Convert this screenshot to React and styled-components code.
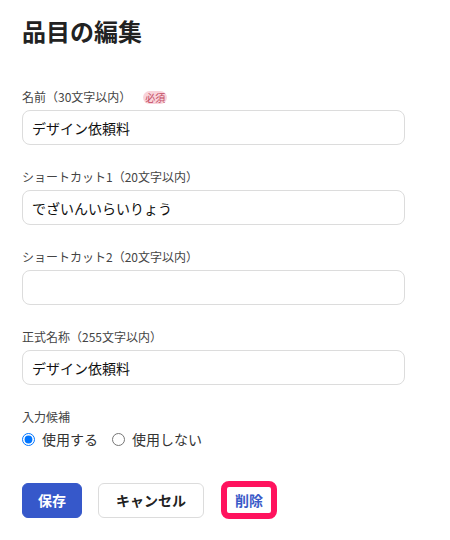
import React from "react";
import styled, { createGlobalStyle } from "styled-components";

const Global = createGlobalStyle`
  html, body { margin: 0; padding: 0; background: #fff; }
  body { font-family: "Noto Sans CJK JP", "Noto Sans", sans-serif; color: #222; }
  * { box-sizing: border-box; }
`;

const Page = styled.div`
  padding: 13px 22px 20px 22px;
  width: 427px;
`;

const Title = styled.h1`
  margin: 0 0 39px 0;
  font-size: 24px;
  font-weight: 700;
  line-height: 36px;
  color: #222;
`;

const Form = styled.form`
  display: flex;
  flex-direction: column;
  gap: 23px;
`;

const Field = styled.div`
  display: flex;
  flex-direction: column;
  gap: 4px;
`;

const LabelRow = styled.div`
  display: flex;
  align-items: center;
  height: 18px;
`;

const Label = styled.label`
  font-size: 12px;
  line-height: 18px;
  color: #444;
`;

const Badge = styled.span`
  margin-left: 12px;
  display: inline-flex;
  align-items: center;
  justify-content: center;
  height: 13px;
  padding: 0 2px;
  border-radius: 7px;
  background: #f9d3da;
  color: #c24a63;
  font-size: 10px;
  line-height: 13px;
`;

const Input = styled.input`
  width: 100%;
  height: 35px;
  border: 1px solid #dcdcdc;
  border-radius: 8px;
  padding: 0 9px;
  font-family: inherit;
  font-size: 14px;
  color: #111;
  background: #fff;
  outline: none;
`;

const RadioRow = styled.div`
  display: flex;
  align-items: center;
  gap: 14px;
  height: 20px;
  margin-top: -1px;
`;

const RadioLabel = styled.label`
  display: inline-flex;
  align-items: center;
  gap: 7px;
  font-size: 14px;
  color: #333;
`;

const Radio = styled.input`
  margin: 0;
  width: 13px;
  height: 13px;
`;

const Actions = styled.div`
  display: flex;
  align-items: center;
  gap: 16px;
  margin-top: 9px;
`;

const Button = styled.button`
  height: 35px;
  padding: 0 ${(p) => p.$pad || 15}px;
  border-radius: 6px;
  font-family: inherit;
  font-size: 14px;
  font-weight: 700;
  cursor: pointer;
  border: 1px solid ${(p) => (p.$primary ? "#3658ca" : "#dcdcdc")};
  background: ${(p) => (p.$primary ? "#3658ca" : "#fff")};
  color: ${(p) => (p.$primary ? "#fff" : "#222")};
`;

const DangerButton = styled.button`
  height: 38px;
  width: 56px;
  margin-left: 1px;
  border: 6px solid #ff135e;
  border-radius: 8px;
  background: #fff;
  color: #3a5bc8;
  font-family: inherit;
  font-size: 14px;
  font-weight: 700;
  padding: 0;
  cursor: pointer;
`;

export default function App() {
  return (
    <>
      <Global />
      <Page>
        <Title>品目の編集</Title>
        <Form onSubmit={(e) => e.preventDefault()}>
          <Field>
            <LabelRow>
              <Label>名前（30文字以内）</Label>
              <Badge>必須</Badge>
            </LabelRow>
            <Input defaultValue="デザイン依頼料" />
          </Field>
          <Field>
            <LabelRow>
              <Label>ショートカット1（20文字以内）</Label>
            </LabelRow>
            <Input defaultValue="でざいんいらいりょう" />
          </Field>
          <Field>
            <LabelRow>
              <Label>ショートカット2（20文字以内）</Label>
            </LabelRow>
            <Input defaultValue="" />
          </Field>
          <Field>
            <LabelRow>
              <Label>正式名称（255文字以内）</Label>
            </LabelRow>
            <Input defaultValue="デザイン依頼料" />
          </Field>
          <Field>
            <LabelRow>
              <Label>入力候補</Label>
            </LabelRow>
            <RadioRow>
              <RadioLabel>
                <Radio type="radio" name="suggest" defaultChecked />
                使用する
              </RadioLabel>
              <RadioLabel>
                <Radio type="radio" name="suggest" />
                使用しない
              </RadioLabel>
            </RadioRow>
          </Field>
          <Actions>
            <Button $primary>保存</Button>
            <Button $pad={17}>キャンセル</Button>
            <DangerButton>削除</DangerButton>
          </Actions>
        </Form>
      </Page>
    </>
  );
}
